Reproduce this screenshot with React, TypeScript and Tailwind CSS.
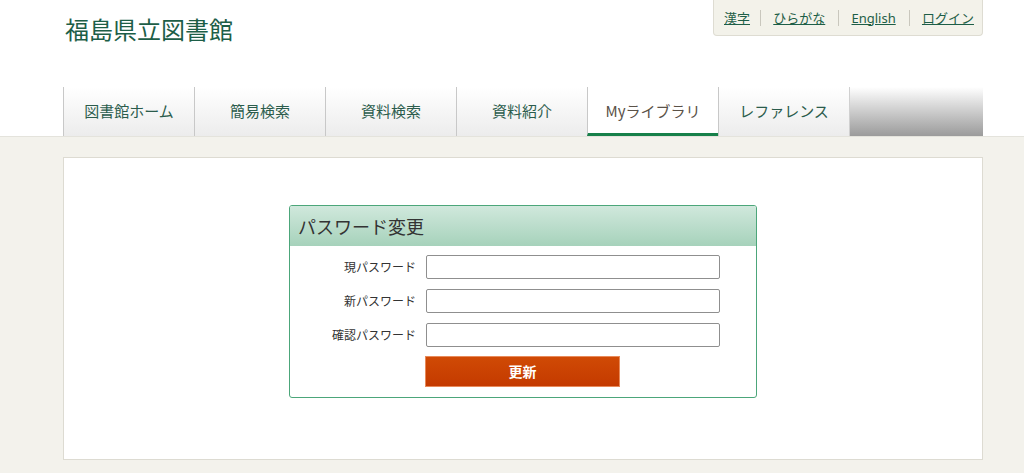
import React from "react";

const font = { fontFamily: '"Noto Sans CJK JP", "Noto Sans", sans-serif' };

function Tab({ label, active }: { label: string; active?: boolean }) {
  return (
    <div
      className={
        "w-[131px] h-full flex items-center justify-center border-l border-[#c8c8c8] text-[15px] " +
        (active
          ? "bg-white text-[#5a5248] border-b-[3px] border-b-[#17804a] pt-[3px]"
          : "bg-gradient-to-b from-white to-[#ececec] text-[#2b5c4c]")
      }
    >
      {label}
    </div>
  );
}

function Row({ label }: { label: string }) {
  return (
    <div className="flex items-center h-[24px]">
      <div className="w-[136px] shrink-0 text-right text-[12px] text-[#333] pr-[10px] whitespace-nowrap">{label}</div>
      <input
        type="password"
        className="w-[294px] h-[24px] shrink-0 border border-[#8f8f8f] rounded-[2px] bg-white outline-none"
      />
    </div>
  );
}

export default function App() {
  return (
    <div className="w-[1024px] h-[473px] bg-[#f3f2ec] overflow-hidden" style={font}>
      <header className="bg-white h-[137px] border-b border-[#e4e3dc]">
        <div className="ml-[63px] w-[920px] h-full flex flex-col relative">
          <div className="flex justify-between items-start h-[88px]">
            <h1 className="mt-[12px] ml-[2px] text-[24px] leading-[34px] text-[#1d5e47] font-normal">福島県立図書館</h1>
            <div className="w-[270px] h-[36px] shrink-0 whitespace-nowrap bg-[#f3f2ea] border border-t-0 border-[#dedcd2] rounded-b-[4px] flex items-center justify-center text-[13px] text-[#1d5e47]">
              <a className="underline px-[10px] leading-[16px]">漢字</a>
              <span className="w-px h-[16px] bg-[#c9c7bd]" />
              <a className="underline px-[13px] leading-[16px]">ひらがな</a>
              <span className="w-px h-[16px] bg-[#c9c7bd]" />
              <a className="underline px-[13px] leading-[16px]" style={{ fontFamily: '"Noto Sans", sans-serif' }}>English</a>
              <span className="w-px h-[16px] bg-[#c9c7bd]" />
              <a className="underline pl-[13px] pr-[8px] leading-[16px]">ログイン</a>
            </div>
          </div>
          <nav className="flex h-[49px]">
            <Tab label="図書館ホーム" />
            <Tab label="簡易検索" />
            <Tab label="資料検索" />
            <Tab label="資料紹介" />
            <Tab label="Myライブラリ" active />
            <Tab label="レファレンス" />
            <div className="flex-1 bg-gradient-to-b from-white to-[#9b9b9b] border-l border-[#d0d0d0]" />
          </nav>
        </div>
      </header>
      <main className="ml-[63px] mt-[20px] w-[920px] h-[303px] bg-white border border-[#dddbd2] pt-[47px]">
        <div className="mx-auto w-[468px] h-[193px] border border-[#4ca67a] rounded-[3px] overflow-hidden">
          <div className="h-[40px] bg-gradient-to-b from-[#d0e8dc] to-[#a6d2bb] flex items-center pl-[8px] text-[18px] text-[#333]">
            パスワード変更
          </div>
          <div className="flex flex-col gap-[10px] pt-[9px]">
            <Row label="現パスワード" />
            <Row label="新パスワード" />
            <Row label="確認パスワード" />
          </div>
          <div className="pl-[135px] pt-[9px]">
            <button className="w-[195px] h-[31px] bg-gradient-to-b from-[#d04a05] to-[#c43a00] border border-[#e88a5a] text-white font-bold text-[14px]">
              更新
            </button>
          </div>
        </div>
      </main>
    </div>
  );
}
